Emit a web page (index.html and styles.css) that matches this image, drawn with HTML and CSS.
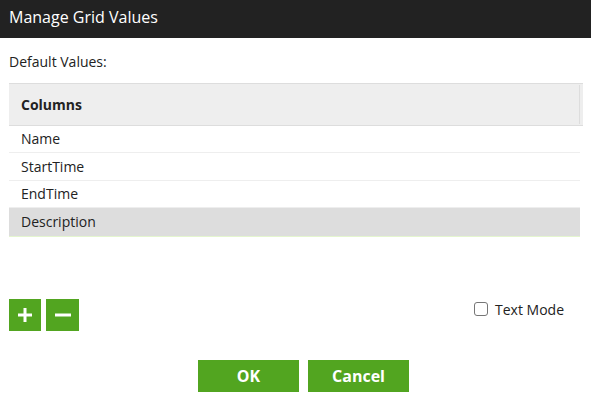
FILE: index.html
```html
<!DOCTYPE html>
<html>
<head>
<meta charset="utf-8">
<link rel="stylesheet" href="styles.css">
</head>
<body>
<div class="dialog">
  <div class="titlebar">Manage Grid Values</div>
  <div class="content">
    <div class="label">Default Values:</div>
    <div class="grid">
      <div class="grid-head">
        <div class="head-cell">Columns</div>
      </div>
      <div class="row">Name</div>
      <div class="row even">StartTime</div>
      <div class="row">EndTime</div>
      <div class="row selected">Description</div>
    </div>
    <div class="tools">
      <div class="icon-buttons">
        <button class="icon-btn" aria-label="Add">
          <svg width="16" height="16" viewBox="0 0 16 16"><path d="M8 1v14M1 8h14" stroke="#fff" stroke-width="3" fill="none"/></svg>
        </button>
        <button class="icon-btn wide" aria-label="Remove">
          <svg width="18" height="16" viewBox="0 0 18 16"><path d="M1 8h16" stroke="#fff" stroke-width="3" fill="none"/></svg>
        </button>
      </div>
      <label class="textmode"><span class="box"></span>Text Mode</label>
    </div>
    <div class="actions">
      <button class="btn">OK</button>
      <button class="btn">Cancel</button>
    </div>
  </div>
</div>
</body>
</html>
```

FILE: styles.css
```css
html, body {
  margin: 0;
  padding: 0;
  background: #fff;
}
body {
  font-family: "Open Sans", "Noto Sans", sans-serif;
  color: #222;
  font-size: 14px;
}
.dialog {
  width: 591px;
  height: 402px;
}
.titlebar {
  background: #222;
  color: #fff;
  height: 38px;
  box-sizing: border-box;
  padding: 0 9px 4px;
  font-size: 16px;
  line-height: 34px;
}
.content {
  padding: 15px 0 0 9px;
}
.label {
  line-height: 18px;
  height: 18px;
}
.grid {
  margin-top: 12px;
  width: 571px;
}
.grid-head {
  width: 574px;
  height: 43px;
  box-sizing: border-box;
  background: #eee;
  border-top: 1px solid #ddd;
  border-bottom: 1px solid #ddd;
  display: flex;
  align-items: center;
}
.head-cell {
  width: 571px;
  box-sizing: border-box;
  height: 39px;
  line-height: 39px;
  padding-left: 12px;
  font-weight: bold;
  border-right: 1px solid #ddd;
}
.row {
  height: 27px;
  line-height: 26px;
  box-sizing: border-box;
  padding-left: 12px;
  border-bottom: 1px solid #eee;
}
.row.even {
  height: 28px;
  line-height: 27px;
}
.row.selected {
  background: #ddd;
  border-bottom: 1px solid #e4f5cf;
  height: 29px;
  line-height: 28px;
}
.tools {
  margin-top: 62px;
  display: flex;
  justify-content: space-between;
  align-items: flex-start;
  width: 555px;
}
.icon-buttons {
  display: flex;
  gap: 5px;
}
.icon-btn {
  width: 32px;
  height: 32px;
  border: 0;
  padding: 0;
  margin: 0;
  background: #52a520;
  display: flex;
  align-items: center;
  justify-content: center;
}
.icon-btn.wide {
  width: 33px;
}
.textmode {
  display: flex;
  align-items: center;
  gap: 7px;
  margin-top: 2px;
  font-size: 14px;
  line-height: 18px;
  color: #222;
}
.box {
  width: 12px;
  height: 12px;
  border: 1px solid #767676;
  border-radius: 3px;
  background: #fff;
  margin-top: -3px;
}
.actions {
  margin-top: 29px;
  display: flex;
  justify-content: center;
  gap: 9px;
  width: 582px;
  box-sizing: border-box;
  padding-left: 7px;
}
.btn {
  width: 101px;
  height: 32px;
  border: 0;
  margin: 0;
  padding: 0;
  background: #52a520;
  color: #fff;
  font-family: "Open Sans", "Noto Sans", sans-serif;
  font-weight: bold;
  font-size: 16px;
}
```
